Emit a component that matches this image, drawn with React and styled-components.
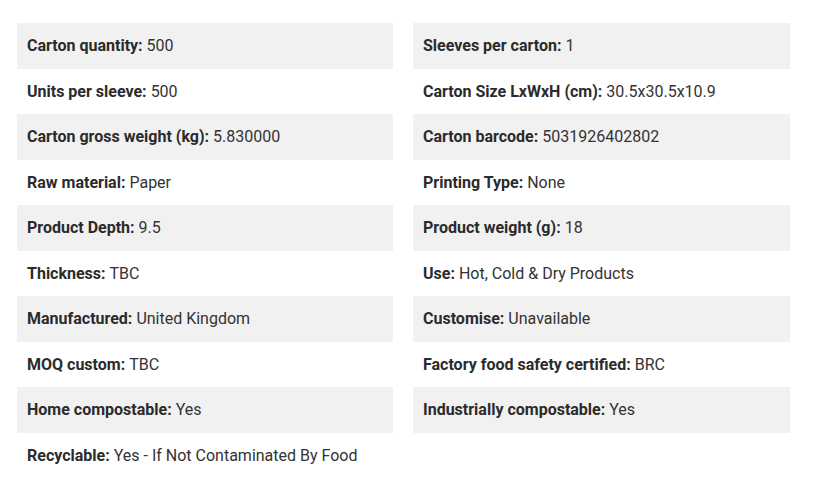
import React from 'react';
import { styled, createGlobalStyle } from 'styled-components';

const GlobalStyle = createGlobalStyle`
  body {
    margin: 0;
    background: #fff;
    font-family: Roboto, 'Liberation Sans', sans-serif;
  }
`;

const Specs = styled.div`
  display: grid;
  grid-template-columns: 376px 377px;
  column-gap: 20px;
  padding: 23px 0 0 17px;
`;

const Column = styled.div`
  display: flex;
  flex-direction: column;
`;

const Row = styled.div`
  display: flex;
  align-items: center;
  height: 45.5px;
  padding: 0 10px;
  background: ${(p) => (p.$shaded ? '#f1f1f1' : 'transparent')};
  font-size: 16px;
  color: #333;
`;

const Label = styled.strong`
  font-weight: 700;
  margin-right: 4px;
  color: #2b2b2b;
`;

const left = [
  ['Carton quantity:', '500'],
  ['Units per sleeve:', '500'],
  ['Carton gross weight (kg):', '5.830000'],
  ['Raw material:', 'Paper'],
  ['Product Depth:', '9.5'],
  ['Thickness:', 'TBC'],
  ['Manufactured:', 'United Kingdom'],
  ['MOQ custom:', 'TBC'],
  ['Home compostable:', 'Yes'],
  ['Recyclable:', 'Yes - If Not Contaminated By Food'],
];

const right = [
  ['Sleeves per carton:', '1'],
  ['Carton Size LxWxH (cm):', '30.5x30.5x10.9'],
  ['Carton barcode:', '5031926402802'],
  ['Printing Type:', 'None'],
  ['Product weight (g):', '18'],
  ['Use:', 'Hot, Cold & Dry Products'],
  ['Customise:', 'Unavailable'],
  ['Factory food safety certified:', 'BRC'],
  ['Industrially compostable:', 'Yes'],
];

function SpecColumn({ items }) {
  return (
    <Column>
      {items.map(([label, value], i) => (
        <Row key={label} $shaded={i % 2 === 0}>
          <span>
            <Label>{label}</Label>
            {value}
          </span>
        </Row>
      ))}
    </Column>
  );
}

export default function App() {
  return (
    <>
      <GlobalStyle />
      <Specs>
        <SpecColumn items={left} />
        <SpecColumn items={right} />
      </Specs>
    </>
  );
}
